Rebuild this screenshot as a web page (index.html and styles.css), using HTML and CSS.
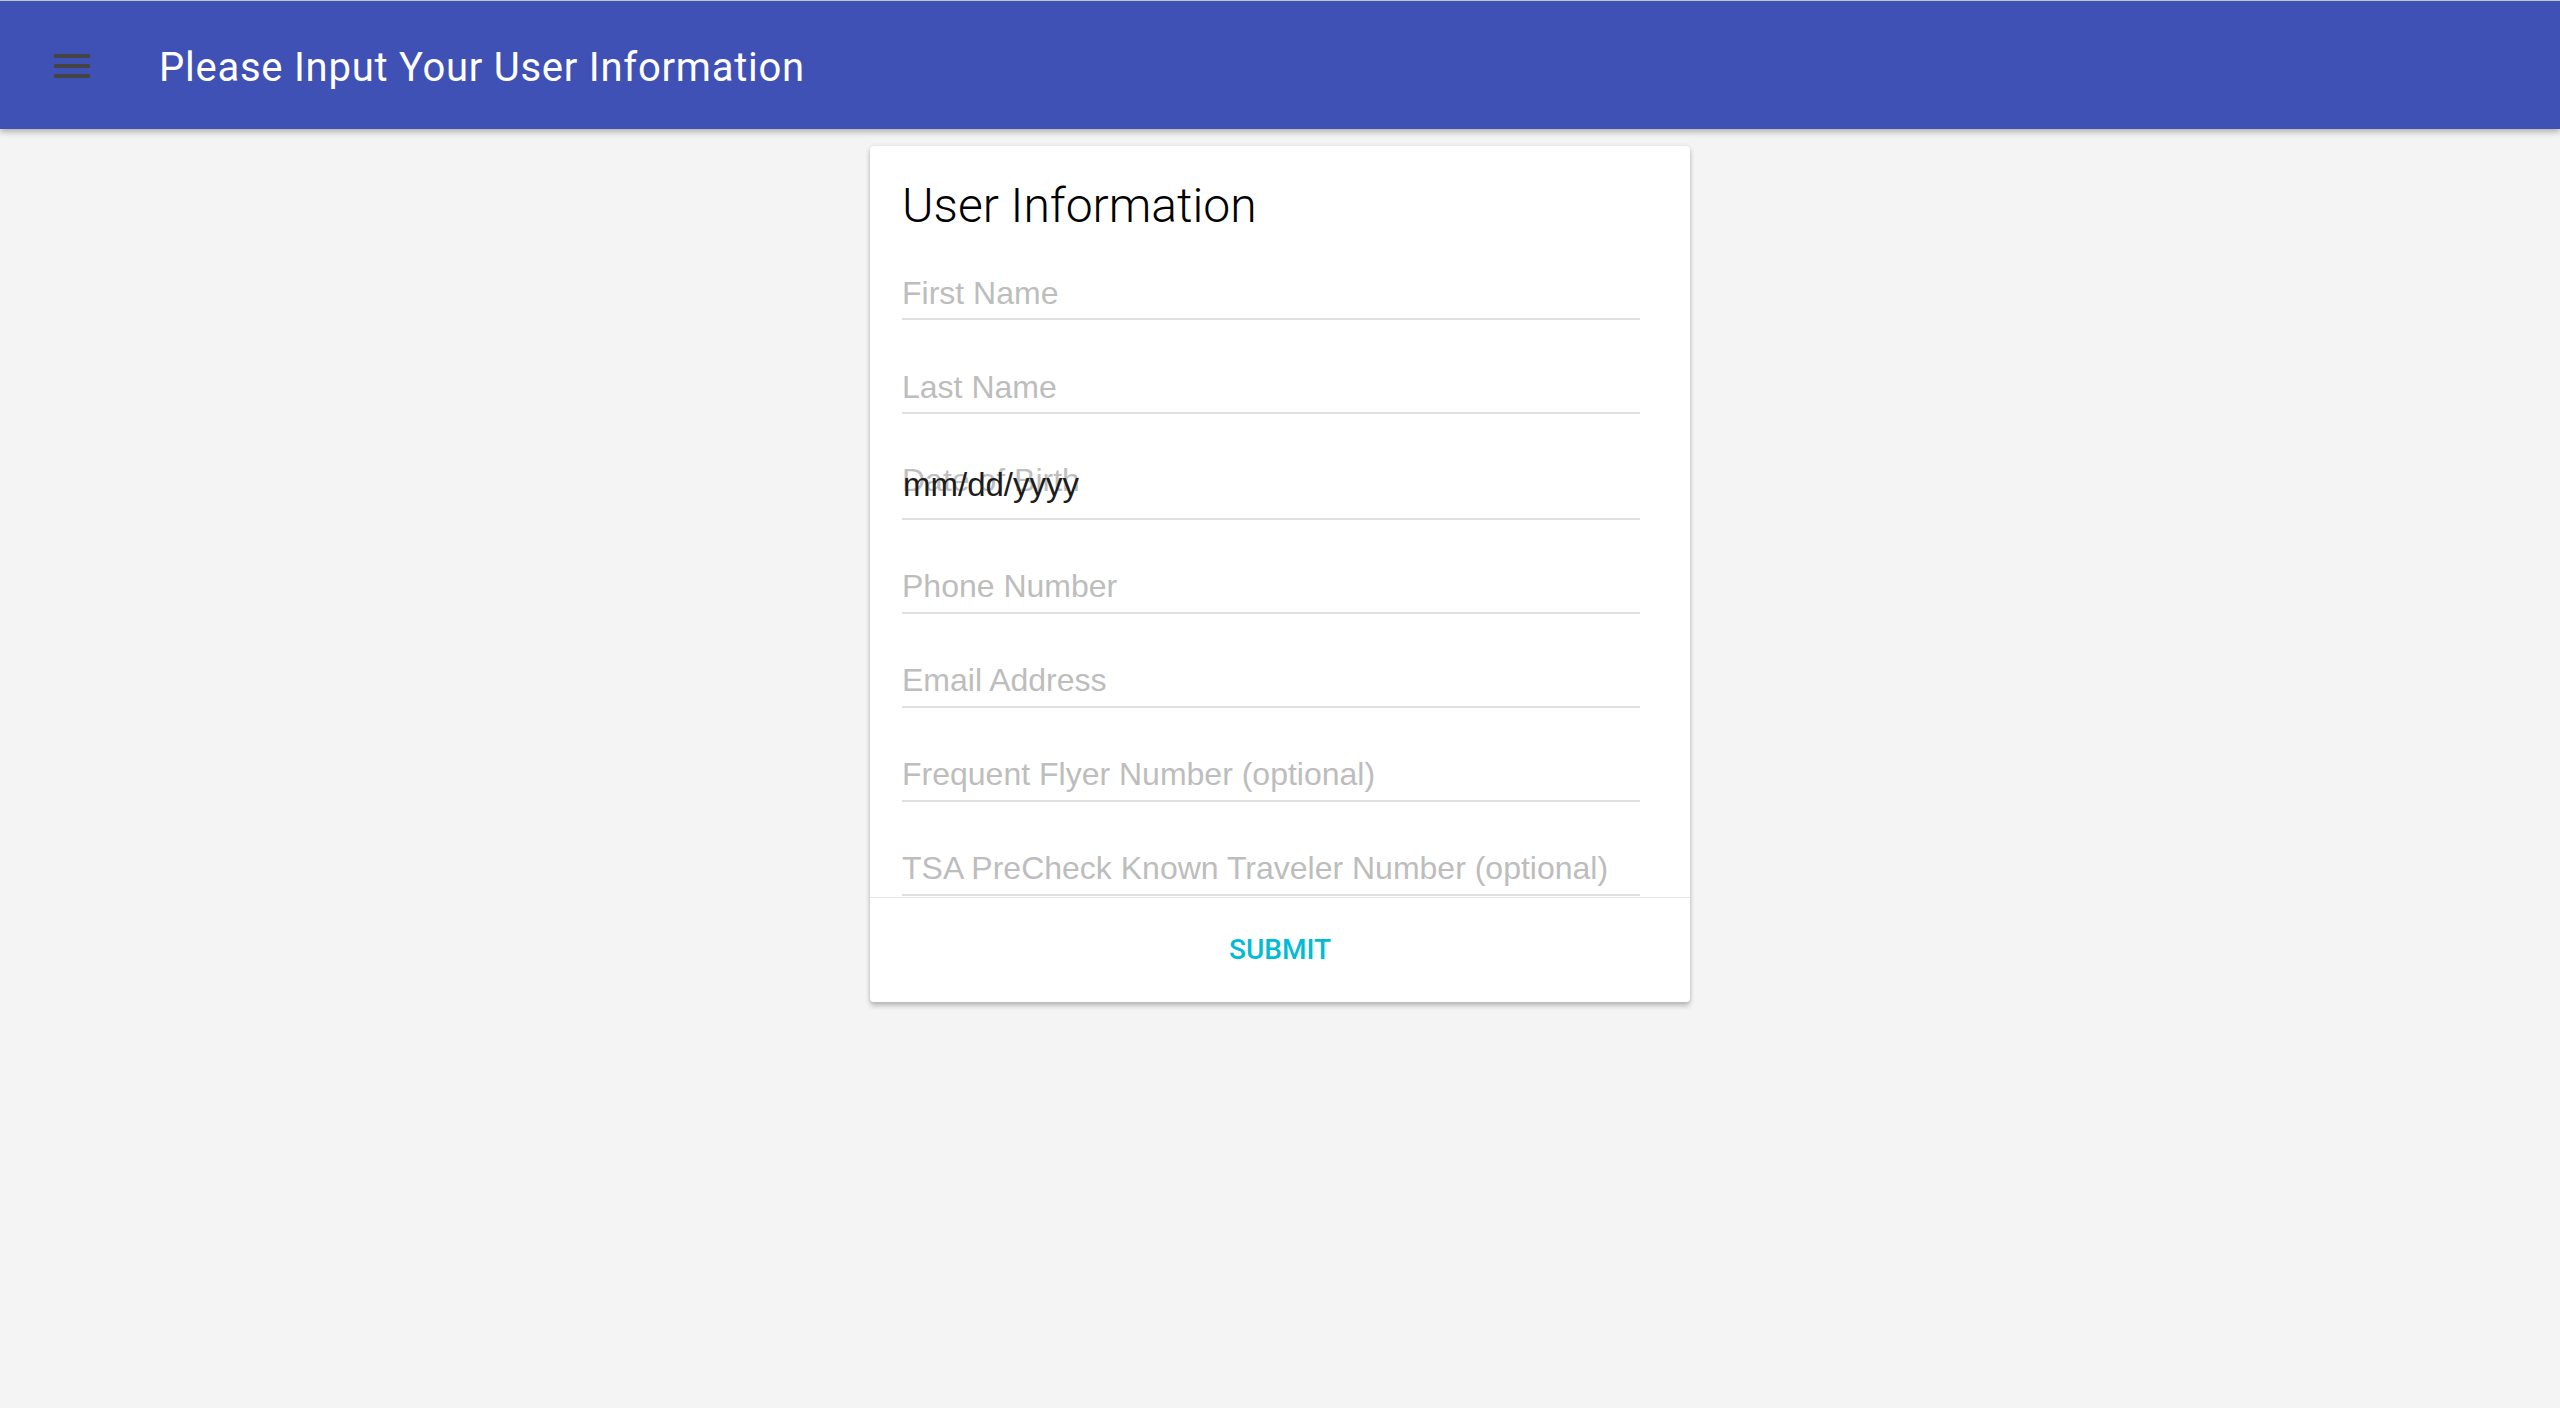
FILE: index.html
```html
<!DOCTYPE html>
<html lang="en">
<head>
<meta charset="utf-8">
<title>User Information</title>
<link rel="stylesheet" href="styles.css">
</head>
<body>
<header class="toolbar">
  <button class="menu-btn" type="button" aria-label="Menu">
    <svg viewBox="0 0 24 24" width="48" height="48" aria-hidden="true"><path d="M3 6h18v2H3zM3 11h18v2H3zM3 16h18v2H3z"/></svg>
  </button>
  <h1 class="toolbar-title">Please Input Your User Information</h1>
</header>
<main class="page">
  <form class="card">
    <h2 class="card-title">User Information</h2>
    <div class="fields">
      <div class="field"><input class="field-input" type="text" placeholder="First Name"></div>
      <div class="field"><input class="field-input" type="text" placeholder="Last Name"></div>
      <div class="field field-date">
        <span class="date-label">Date of Birth</span>
        <input class="field-input date-input" type="text" value="mm/dd/yyyy" aria-label="Date of Birth">
      </div>
      <div class="field"><input class="field-input" type="text" placeholder="Phone Number"></div>
      <div class="field"><input class="field-input" type="text" placeholder="Email Address"></div>
      <div class="field"><input class="field-input" type="text" placeholder="Frequent Flyer Number (optional)"></div>
      <div class="field"><input class="field-input" type="text" placeholder="TSA PreCheck Known Traveler Number (optional)"></div>
    </div>
    <div class="actions">
      <button class="submit" type="submit">Submit</button>
    </div>
  </form>
</main>
</body>
</html>
```

FILE: styles.css
```css
* {
  box-sizing: border-box;
}

html,
body {
  margin: 0;
  padding: 0;
}

body {
  background: #f4f4f4;
  font-family: Roboto, "Liberation Sans", Arial, sans-serif;
  min-height: 1408px;
}

.toolbar {
  display: flex;
  align-items: center;
  height: 129px;
  border-top: 1px solid #c4c4c4;
  padding: 2px 0 0 48px;
  background: #3f51b5;
  box-shadow: 0 3px 6px rgba(0, 0, 0, 0.28);
  position: relative;
  z-index: 2;
}

.menu-btn {
  display: block;
  width: 48px;
  height: 48px;
  padding: 0;
  margin: 0;
  border: 0;
  background: none;
}

.menu-btn svg {
  display: block;
  fill: #444444;
}

.toolbar-title {
  margin: 3px 0 0 63px;
  font-family: Roboto, sans-serif;
  font-weight: 400;
  font-size: 40px;
  line-height: 48px;
  letter-spacing: 0.75px;
  color: #ffffff;
}

.page {
  display: flex;
  justify-content: center;
  padding-top: 17px;
}

.card {
  width: 820px;
  background: #ffffff;
  border-radius: 4px;
  box-shadow: 0 4px 5px rgba(0, 0, 0, 0.22), 0 0 4px rgba(0, 0, 0, 0.1);
  padding: 32px 0 0;
}

.card-title {
  margin: 0 32px;
  font-family: Roboto, sans-serif;
  font-weight: 300;
  font-size: 48px;
  line-height: 56px;
  color: #000000;
}

.fields {
  padding: 0 32px 1px;
}

.field {
  position: relative;
  display: flex;
  align-items: flex-end;
  width: 738px;
  height: 86px;
  margin-top: 8px;
  padding-bottom: 5px;
  border-bottom: 2px solid #e0e0e0;
}

.field:first-child {
  margin-top: 0;
}

.field-input {
  display: block;
  width: 100%;
  height: 40px;
  margin: 0;
  padding: 0;
  border: 0;
  outline: none;
  background: transparent;
  font-family: "Liberation Sans", Arial, sans-serif;
  font-size: 32px;
  color: #212121;
}

.field-input::placeholder {
  color: #bdbdbd;
  opacity: 1;
}

.field-date {
  height: 97.5px;
  padding-bottom: 13px;
}

.date-label {
  position: absolute;
  left: 0;
  bottom: 18px;
  font-family: "Liberation Sans", Arial, sans-serif;
  font-size: 32px;
  line-height: 40px;
  color: #bfbfbf;
}

.date-input {
  position: relative;
  z-index: 1;
  font-size: 33px;
  color: #1c1c1c;
  padding-left: 1px;
}

.actions {
  display: flex;
  justify-content: center;
  padding: 16px;
  border-top: 1px solid #e6e6e6;
}

.submit {
  height: 72px;
  padding: 0 32px;
  margin: 0;
  border: 0;
  background: none;
  font-family: Roboto, sans-serif;
  font-weight: 500;
  font-size: 28px;
  line-height: 72px;
  text-transform: uppercase;
  color: #00bcd4;
}
```
